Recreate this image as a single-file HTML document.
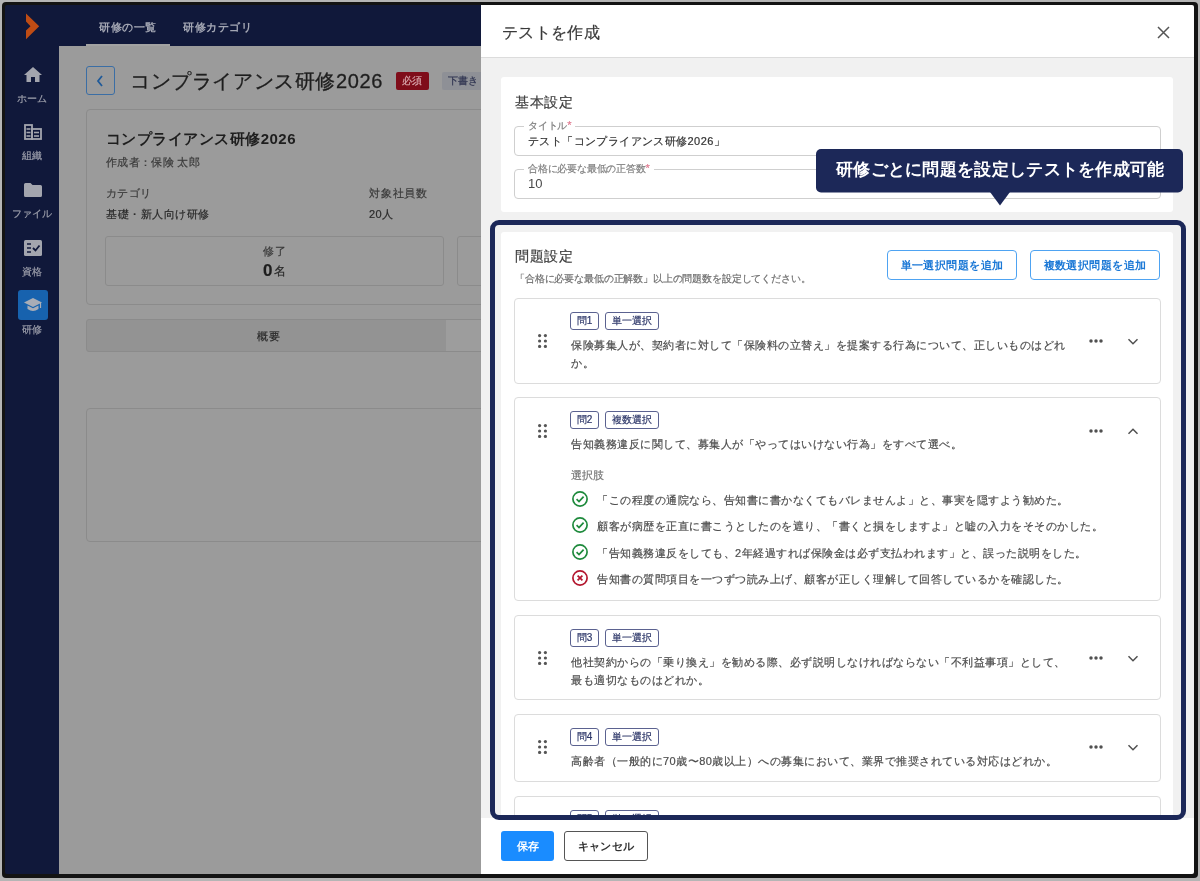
<!DOCTYPE html>
<html><head><meta charset="utf-8">
<style>
*{box-sizing:border-box;margin:0;padding:0}
html,body{width:1200px;height:881px;overflow:hidden;background:#b5b5b5}
body{font-family:"Liberation Sans",sans-serif;color:#333;position:relative}
#outer{position:absolute;left:2px;top:2px;width:1196px;height:876px;background:#131313;border-radius:4px}
#c{will-change:transform;position:absolute;left:0;top:0;width:1200px;height:881px;clip-path:inset(5px 6px 7px 5px round 2px);background:#9b9b9b}
#c div,#c span,#c svg{position:absolute}
#side{left:0;top:0;width:59px;height:881px;background:#10183a}
#topbar{left:59px;top:0;width:430px;height:46px;background:#10183a}
.tab{top:20px;letter-spacing:0.6px;font-size:11px;line-height:14px;color:#a3a6b3;font-weight:bold;white-space:nowrap}
.nav{left:5px;width:54px;text-align:center;font-size:10px;line-height:12px;color:#9d9fab;white-space:nowrap}
.t{white-space:nowrap}
#modal{left:481px;top:0;width:719px;height:881px;background:#f1f1f1}
#mhead{left:481px;top:0;width:719px;height:58px;background:#fff;border-bottom:1px solid #dcdcdc}
#mfoot{left:481px;top:818px;width:719px;height:63px;background:#fff}
.card{background:#fff;border-radius:3px}
.qcard{background:#fff;border:1px solid #dcdcdc;border-radius:4px}

#body{left:481px;top:58px;width:719px;height:760px;overflow:hidden;background:#f1f1f1}
#body > *{margin-left:-481px;margin-top:-58px}
.inp{border:1px solid #cfcfcf;border-radius:4px;background:#fff}
.lbl{font-size:10px;letter-spacing:-0.2px;line-height:12px;color:#808080;background:#fff;padding:0 4px;white-space:nowrap}
.req{position:static!important;color:#e07a90;font-size:11px}
.obtn{border:1px solid #4ea3f2;border-radius:4px;background:#fff;color:#1b78d6;font-weight:bold;font-size:11px;letter-spacing:0.44px;line-height:28px;text-align:center;white-space:nowrap}
.badge{height:18px;border:1px solid #5b6290;border-radius:3px;color:#2c3668;font-size:10px;line-height:16px;text-align:center;white-space:nowrap;background:#fff}
.qtext{font-size:11px;letter-spacing:0.5px;line-height:18px;color:#4d4d4d;-webkit-text-stroke:0.25px #4d4d4d;white-space:nowrap}
#hl{z-index:5;left:490px;top:220px;width:696px;height:600px;border:5px solid #1c2858;border-radius:9px}
.pbtn{background:#1a8cff;border-radius:3px;color:#fff;font-weight:bold;font-size:11px;line-height:30px;text-align:center}
.sbtn{border:1px solid #555;border-radius:3px;color:#333;font-weight:bold;font-size:11px;letter-spacing:0.4px;line-height:28px;text-align:center;background:#fff}
#c div{-webkit-text-stroke-width:0.2px}
#c .obtn,#c .pbtn,#c .sbtn,#c .tab{-webkit-text-stroke-width:0}
</style></head>
<body>
<div id="outer"></div>
<div id="c">
  <div id="side"></div>
  <div id="topbar"></div>
  <svg style="left:26px;top:13px" width="15" height="27" viewBox="0 0 15 27"><path d="M0 0.5 L13.2 13.3 L0 26.3 L0 17.6 L4.5 13.3 L0 8.5 Z" fill="#bf4c14"/></svg>
  <svg style="left:24px;top:67px" width="18" height="15" viewBox="0 0 18 15"><path d="M9 0 L18 8 L15.5 8 L15.5 15 L11 15 L11 10 L7 10 L7 15 L2.5 15 L2.5 8 L0 8 Z" fill="#a3a5ae"/></svg>
  <div class="nav" style="top:93px">ホーム</div>
  <svg style="left:24px;top:124px" width="18" height="16" viewBox="0 0 18 16"><g fill="none" stroke="#a3a5ae" stroke-width="1.8"><rect x="1" y="1" width="7" height="14"/><rect x="8" y="5" width="9" height="10"/></g><g stroke="#a3a5ae" stroke-width="1.6"><line x1="2.5" y1="5" x2="6.5" y2="5"/><line x1="2.5" y1="8.5" x2="6.5" y2="8.5"/><line x1="2.5" y1="12" x2="6.5" y2="12"/><line x1="10" y1="8.5" x2="15" y2="8.5"/><line x1="10" y1="12" x2="15" y2="12"/></g></svg>
  <div class="nav" style="top:150px">組織</div>
  <svg style="left:24px;top:183px" width="18" height="14" viewBox="0 0 18 14"><path d="M0 1.5 Q0 0 1.5 0 L6.5 0 L8.5 2 L16.5 2 Q18 2 18 3.5 L18 12.5 Q18 14 16.5 14 L1.5 14 Q0 14 0 12.5 Z" fill="#a3a5ae"/></svg>
  <div class="nav" style="top:208px">ファイル</div>
  <svg style="left:24px;top:240px" width="18" height="16" viewBox="0 0 18 16"><rect x="0" y="0" width="18" height="16" rx="1.5" fill="#a3a5ae"/><g stroke="#10183a" stroke-width="1.5"><line x1="3" y1="4" x2="7" y2="4"/><line x1="3" y1="8" x2="7" y2="8"/><line x1="3" y1="12" x2="7" y2="12"/></g><path d="M9 8 L11.5 10.5 L15.5 5.5" fill="none" stroke="#10183a" stroke-width="1.8"/></svg>
  <div class="nav" style="top:266px">資格</div>
  <div style="left:18px;top:290px;width:30px;height:30px;background:#1762ae;border-radius:3px"></div>
  <svg style="left:24px;top:298px" width="18" height="14" viewBox="0 0 18 14"><path d="M9 0 L18 4.5 L9 9 L0 4.5 Z" fill="#a9adb6"/><path d="M3.5 7.5 L9 10.3 L14.5 7.5 L14.5 11 Q9 15 3.5 11 Z" fill="#a9adb6"/><line x1="16.5" y1="5" x2="16.5" y2="10" stroke="#a9adb6" stroke-width="1.2"/></svg>
  <div class="nav" style="top:324px">研修</div>
  <div class="tab" style="left:99px">研修の一覧</div>
  <div class="tab" style="left:183px">研修カテゴリ</div>

  
  <div style="left:86px;top:44px;width:84px;height:2px;background:#a2a2a2"></div>
  <div style="left:86px;top:66px;width:29px;height:29px;border:1px solid #3b6ea5;border-radius:3px"></div>
  <svg style="left:96px;top:75px" width="8" height="12" viewBox="0 0 8 12"><path d="M6 1 L2 6 L6 11" fill="none" stroke="#1f5a99" stroke-width="1.8"/></svg>
  <div class="t" style="left:130px;top:69px;font-size:20px;letter-spacing:0.6px;line-height:24px;color:#1e1e1e;-webkit-text-stroke:0.3px #1e1e1e">コンプライアンス研修2026</div>
  <div style="left:396px;top:72px;width:33px;height:18px;background:#7f0d1a;border-radius:2px"></div>
  <div class="t" style="left:402px;top:75px;font-size:10px;line-height:12px;color:#d9a9ae">必須</div>
  <div style="left:442px;top:72px;width:45px;height:18px;background:#8e9096;border-radius:2px"></div>
  <div class="t" style="left:448px;top:75px;font-size:10px;line-height:12px;color:#2e3350">下書き</div>
  <div style="left:86px;top:109px;width:420px;height:196px;border:1px solid #8b8b8b;border-radius:4px"></div>
  <div class="t" style="left:106px;top:130px;font-size:15px;letter-spacing:0.47px;line-height:18px;color:#1e1e1e;font-weight:bold;-webkit-text-stroke-width:0">コンプライアンス研修2026</div>
  <div class="t" style="left:106px;top:156px;letter-spacing:0.33px;font-size:11px;line-height:13px;color:#3a3a3a">作成者：保険 太郎</div>
  <div class="t" style="left:106px;top:187px;letter-spacing:0.3px;font-size:11px;line-height:13px;color:#3a3a3a">カテゴリ</div>
  <div class="t" style="left:369px;top:187px;letter-spacing:0.8px;font-size:11px;line-height:13px;color:#3a3a3a">対象社員数</div>
  <div class="t" style="left:106px;top:208px;letter-spacing:0.56px;font-size:11px;line-height:13px;color:#2a2a2a">基礎・新人向け研修</div>
  <div class="t" style="left:369px;top:208px;letter-spacing:0.3px;font-size:11px;line-height:13px;color:#2a2a2a">20人</div>
  <div style="left:105px;top:236px;width:339px;height:50px;border:1px solid #8b8b8b;border-radius:3px"></div>
  <div style="left:457px;top:236px;width:60px;height:50px;border:1px solid #8b8b8b;border-radius:3px"></div>
  <div class="t" style="left:263px;top:245px;letter-spacing:0.5px;font-size:11px;line-height:13px;color:#3a3a3a">修了</div>
  <div class="t" style="left:263px;top:261px;font-size:17px;line-height:19px;color:#1e1e1e;font-weight:bold">0</div>
  <div class="t" style="left:274px;top:265px;font-size:12px;line-height:13px;color:#2a2a2a">名</div>
  <div style="left:86px;top:319px;width:420px;height:33px;border:1px solid #8b8b8b;border-radius:3px;background:#939393"></div>
  <div style="left:446px;top:320px;width:40px;height:31px;background:#9d9d9d"></div>
  <div class="t" style="left:257px;top:330px;letter-spacing:0.5px;font-size:11px;line-height:13px;color:#2a2a2a">概要</div>
  <div style="left:86px;top:408px;width:420px;height:134px;border:1px solid #8b8b8b;border-radius:4px"></div>
  <div id="modal"></div>
  <div id="mhead"></div>
  <div class="t" style="left:502px;top:23px;letter-spacing:0.33px;font-size:16px;line-height:20px;color:#3a3a3a">テストを作成</div>
  <svg style="left:1157px;top:26px" width="13" height="13" viewBox="0 0 13 13"><path d="M1 1 L12 12 M12 1 L1 12" stroke="#555" stroke-width="1.5"/></svg>
  <div id="body">
    <div class="card" style="left:501px;top:77px;width:672px;height:135px"></div>
    <div class="t" style="left:515px;top:94px;letter-spacing:0.6px;font-size:14px;line-height:17px;color:#3d3d3d">基本設定</div>
    <div class="inp" style="left:514px;top:126px;width:647px;height:30px"></div>
    <div class="lbl" style="left:524px;top:119px">タイトル<span class="req">*</span></div>
    <div class="t" style="left:528px;top:134px;letter-spacing:0.4px;font-size:11px;line-height:14px;color:#333">テスト「コンプライアンス研修2026」</div>
    <div class="inp" style="left:514px;top:169px;width:647px;height:30px"></div>
    <div class="lbl" style="left:524px;top:162px">合格に必要な最低の正答数<span class="req">*</span></div>
    <div class="t" style="left:528px;top:176px;font-size:13px;line-height:15px;color:#4a4a4a;-webkit-text-stroke-width:0">10</div>
    <div class="card" style="left:501px;top:232px;width:672px;height:620px"></div>
    <div class="t" style="left:515px;top:248px;letter-spacing:0.5px;font-size:14px;line-height:17px;color:#3d3d3d">問題設定</div>
    <div class="t" style="left:515px;top:273px;letter-spacing:-0.15px;font-size:10px;line-height:12px;color:#6e6e6e">「合格に必要な最低の正解数」以上の問題数を設定してください。</div>
    <div class="obtn" style="left:887px;top:250px;width:130px;height:30px">単一選択問題を追加</div>
    <div class="obtn" style="left:1030px;top:250px;width:130px;height:30px">複数選択問題を追加</div>
<div class="qcard" style="left:514px;top:298px;width:647px;height:86px"></div>
<div class="badge" style="left:570px;top:312px;width:29px">問1</div><div class="badge" style="left:605px;top:312px;width:54px">単一選択</div>
<div class="qtext" style="left:571px;top:336px">保険募集人が、契約者に対して「保険料の立替え」を提案する行為について、正しいものはどれ<br>か。</div>
<svg style="left:538px;top:334px" width="10" height="14" viewBox="0 0 10 14"><circle cx="1.6" cy="1.6" r="1.6" fill="#555"/><circle cx="1.6" cy="7" r="1.6" fill="#555"/><circle cx="1.6" cy="12.4" r="1.6" fill="#555"/><circle cx="7.4" cy="1.6" r="1.6" fill="#555"/><circle cx="7.4" cy="7" r="1.6" fill="#555"/><circle cx="7.4" cy="12.4" r="1.6" fill="#555"/></svg><svg style="left:1089px;top:339px" width="15" height="4" viewBox="0 0 15 4"><circle cx="2" cy="2" r="1.75" fill="#505050"/><circle cx="7" cy="2" r="1.75" fill="#505050"/><circle cx="12" cy="2" r="1.75" fill="#505050"/></svg><svg style="left:1127px;top:338px" width="12" height="7" viewBox="0 0 12 7"><path d="M1.5 1.2 L6 5.7 L10.5 1.2" fill="none" stroke="#505050" stroke-width="1.5"/></svg>
<div class="qcard" style="left:514px;top:397px;width:647px;height:204px"></div>
<div class="badge" style="left:570px;top:411px;width:29px">問2</div><div class="badge" style="left:605px;top:411px;width:54px">複数選択</div>
<div class="qtext" style="left:571px;top:435px">告知義務違反に関して、募集人が「やってはいけない行為」をすべて選べ。</div>
<svg style="left:538px;top:424px" width="10" height="14" viewBox="0 0 10 14"><circle cx="1.6" cy="1.6" r="1.6" fill="#555"/><circle cx="1.6" cy="7" r="1.6" fill="#555"/><circle cx="1.6" cy="12.4" r="1.6" fill="#555"/><circle cx="7.4" cy="1.6" r="1.6" fill="#555"/><circle cx="7.4" cy="7" r="1.6" fill="#555"/><circle cx="7.4" cy="12.4" r="1.6" fill="#555"/></svg><svg style="left:1089px;top:429px" width="15" height="4" viewBox="0 0 15 4"><circle cx="2" cy="2" r="1.75" fill="#505050"/><circle cx="7" cy="2" r="1.75" fill="#505050"/><circle cx="12" cy="2" r="1.75" fill="#505050"/></svg><svg style="left:1127px;top:428px" width="12" height="7" viewBox="0 0 12 7"><path d="M1.5 5.8 L6 1.3 L10.5 5.8" fill="none" stroke="#505050" stroke-width="1.5"/></svg>
<div class="t" style="left:571px;top:468px;font-size:11px;line-height:14px;color:#777">選択肢</div>
<svg style="left:572px;top:491.0px" width="16" height="16" viewBox="0 0 16 16"><circle cx="8" cy="8" r="7.1" fill="none" stroke="#1e8a3c" stroke-width="1.7"/><path d="M4.6 8.2 L7 10.6 L11.6 5.6" fill="none" stroke="#1e8a3c" stroke-width="1.7"/></svg><div class="qtext" style="left:597px;top:491px">「この程度の通院なら、告知書に書かなくてもバレませんよ」と、事実を隠すよう勧めた。</div>
<svg style="left:572px;top:517.3px" width="16" height="16" viewBox="0 0 16 16"><circle cx="8" cy="8" r="7.1" fill="none" stroke="#1e8a3c" stroke-width="1.7"/><path d="M4.6 8.2 L7 10.6 L11.6 5.6" fill="none" stroke="#1e8a3c" stroke-width="1.7"/></svg><div class="qtext" style="left:597px;top:517.3px">顧客が病歴を正直に書こうとしたのを遮り、「書くと損をしますよ」と嘘の入力をそそのかした。</div>
<svg style="left:572px;top:543.6px" width="16" height="16" viewBox="0 0 16 16"><circle cx="8" cy="8" r="7.1" fill="none" stroke="#1e8a3c" stroke-width="1.7"/><path d="M4.6 8.2 L7 10.6 L11.6 5.6" fill="none" stroke="#1e8a3c" stroke-width="1.7"/></svg><div class="qtext" style="left:597px;top:543.6px">「告知義務違反をしても、2年経過すれば保険金は必ず支払われます」と、誤った説明をした。</div>
<svg style="left:572px;top:569.9px" width="16" height="16" viewBox="0 0 16 16"><circle cx="8" cy="8" r="7.1" fill="none" stroke="#b3162e" stroke-width="1.7"/><path d="M5.6 5.6 L10.4 10.4 M10.4 5.6 L5.6 10.4" fill="none" stroke="#b3162e" stroke-width="1.7"/></svg><div class="qtext" style="left:597px;top:569.9px">告知書の質問項目を一つずつ読み上げ、顧客が正しく理解して回答しているかを確認した。</div>
<div class="qcard" style="left:514px;top:615px;width:647px;height:85px"></div>
<div class="badge" style="left:570px;top:629px;width:29px">問3</div><div class="badge" style="left:605px;top:629px;width:54px">単一選択</div>
<div class="qtext" style="left:571px;top:653px">他社契約からの「乗り換え」を勧める際、必ず説明しなければならない「不利益事項」として、<br>最も適切なものはどれか。</div>
<svg style="left:538px;top:651px" width="10" height="14" viewBox="0 0 10 14"><circle cx="1.6" cy="1.6" r="1.6" fill="#555"/><circle cx="1.6" cy="7" r="1.6" fill="#555"/><circle cx="1.6" cy="12.4" r="1.6" fill="#555"/><circle cx="7.4" cy="1.6" r="1.6" fill="#555"/><circle cx="7.4" cy="7" r="1.6" fill="#555"/><circle cx="7.4" cy="12.4" r="1.6" fill="#555"/></svg><svg style="left:1089px;top:656px" width="15" height="4" viewBox="0 0 15 4"><circle cx="2" cy="2" r="1.75" fill="#505050"/><circle cx="7" cy="2" r="1.75" fill="#505050"/><circle cx="12" cy="2" r="1.75" fill="#505050"/></svg><svg style="left:1127px;top:655px" width="12" height="7" viewBox="0 0 12 7"><path d="M1.5 1.2 L6 5.7 L10.5 1.2" fill="none" stroke="#505050" stroke-width="1.5"/></svg>
<div class="qcard" style="left:514px;top:714px;width:647px;height:68px"></div>
<div class="badge" style="left:570px;top:728px;width:29px">問4</div><div class="badge" style="left:605px;top:728px;width:54px">単一選択</div>
<div class="qtext" style="left:571px;top:752px">高齢者（一般的に70歳〜80歳以上）への募集において、業界で推奨されている対応はどれか。</div>
<svg style="left:538px;top:740px" width="10" height="14" viewBox="0 0 10 14"><circle cx="1.6" cy="1.6" r="1.6" fill="#555"/><circle cx="1.6" cy="7" r="1.6" fill="#555"/><circle cx="1.6" cy="12.4" r="1.6" fill="#555"/><circle cx="7.4" cy="1.6" r="1.6" fill="#555"/><circle cx="7.4" cy="7" r="1.6" fill="#555"/><circle cx="7.4" cy="12.4" r="1.6" fill="#555"/></svg><svg style="left:1089px;top:745px" width="15" height="4" viewBox="0 0 15 4"><circle cx="2" cy="2" r="1.75" fill="#505050"/><circle cx="7" cy="2" r="1.75" fill="#505050"/><circle cx="12" cy="2" r="1.75" fill="#505050"/></svg><svg style="left:1127px;top:744px" width="12" height="7" viewBox="0 0 12 7"><path d="M1.5 1.2 L6 5.7 L10.5 1.2" fill="none" stroke="#505050" stroke-width="1.5"/></svg>
<div class="qcard" style="left:514px;top:796px;width:647px;height:86px"></div>
<div class="badge" style="left:570px;top:810px;width:29px">問5</div><div class="badge" style="left:605px;top:810px;width:54px">単一選択</div>
<div class="qtext" style="left:571px;top:834px">x</div>
<svg style="left:538px;top:833px" width="10" height="14" viewBox="0 0 10 14"><circle cx="1.6" cy="1.6" r="1.6" fill="#555"/><circle cx="1.6" cy="7" r="1.6" fill="#555"/><circle cx="1.6" cy="12.4" r="1.6" fill="#555"/><circle cx="7.4" cy="1.6" r="1.6" fill="#555"/><circle cx="7.4" cy="7" r="1.6" fill="#555"/><circle cx="7.4" cy="12.4" r="1.6" fill="#555"/></svg><svg style="left:1089px;top:838px" width="15" height="4" viewBox="0 0 15 4"><circle cx="2" cy="2" r="1.75" fill="#505050"/><circle cx="7" cy="2" r="1.75" fill="#505050"/><circle cx="12" cy="2" r="1.75" fill="#505050"/></svg><svg style="left:1127px;top:837px" width="12" height="7" viewBox="0 0 12 7"><path d="M1.5 1.2 L6 5.7 L10.5 1.2" fill="none" stroke="#505050" stroke-width="1.5"/></svg>
  </div>
  <div id="hl"></div>
  <svg style="left:816px;top:149px" width="368" height="58" viewBox="0 0 368 58"><rect x="0" y="0" width="367" height="43.5" rx="5" fill="#1c2858"/><path d="M174 43 L184 56.5 L194 43 Z" fill="#1c2858"/></svg>
  <div class="t" style="left:836px;top:161px;font-size:17px;line-height:18px;color:#fff;font-weight:bold;letter-spacing:0.3px;-webkit-text-stroke-width:0">研修ごとに問題を設定しテストを作成可能</div>
  <div id="mfoot"></div>
  <div class="pbtn" style="left:501px;top:831px;width:53px;height:30px">保存</div>
  <div class="sbtn" style="left:564px;top:831px;width:84px;height:30px">キャンセル</div>
</div>
</body></html>
